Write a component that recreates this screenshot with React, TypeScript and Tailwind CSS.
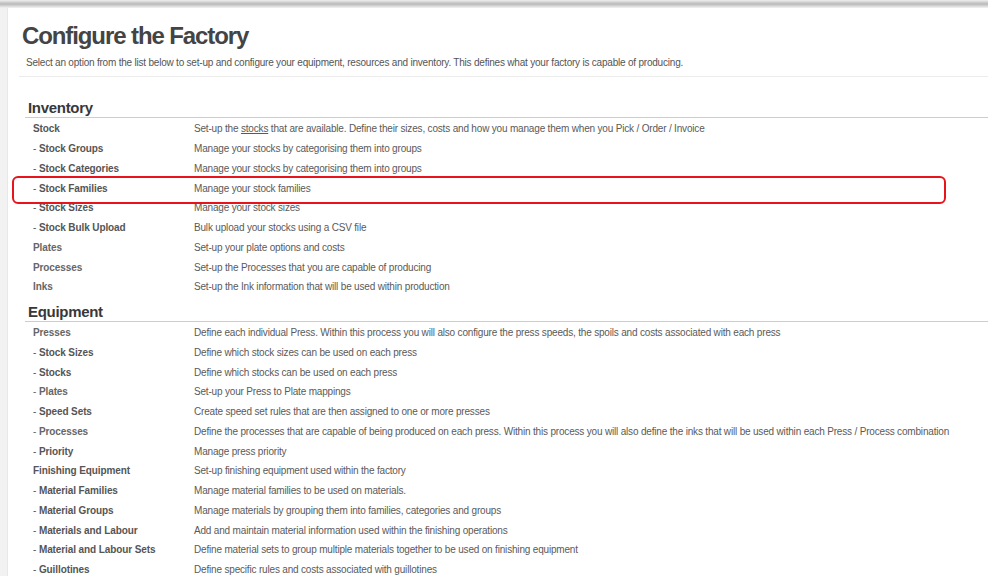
import React from 'react';

interface Row {
  label: string;
  sub?: boolean;
  soft?: boolean;
  desc: React.ReactNode;
}

const inventory: Row[] = [
  {
    label: 'Stock',
    desc: (
      <>
        Set-up the <span className="underline">stocks</span> that are available. Define their sizes, costs and how you manage them when you Pick / Order / Invoice
      </>
    ),
  },
  { label: 'Stock Groups', sub: true, desc: 'Manage your stocks by categorising them into groups' },
  { label: 'Stock Categories', sub: true, desc: 'Manage your stocks by categorising them into groups' },
  { label: 'Stock Families', sub: true, desc: 'Manage your stock families' },
  { label: 'Stock Sizes', sub: true, desc: 'Manage your stock sizes' },
  { label: 'Stock Bulk Upload', sub: true, desc: 'Bulk upload your stocks using a CSV file' },
  { label: 'Plates', soft: true, desc: 'Set-up your plate options and costs' },
  { label: 'Processes', soft: true, desc: 'Set-up the Processes that you are capable of producing' },
  { label: 'Inks', soft: true, desc: 'Set-up the Ink information that will be used within production' },
];

const equipment: Row[] = [
  {
    label: 'Presses',
    soft: true,
    desc: 'Define each individual Press. Within this process you will also configure the press speeds, the spoils and costs associated with each press',
  },
  { label: 'Stock Sizes', sub: true, desc: 'Define which stock sizes can be used on each press' },
  { label: 'Stocks', sub: true, desc: 'Define which stocks can be used on each press' },
  { label: 'Plates', sub: true, soft: true, desc: 'Set-up your Press to Plate mappings' },
  { label: 'Speed Sets', sub: true, desc: 'Create speed set rules that are then assigned to one or more presses' },
  {
    label: 'Processes',
    sub: true,
    soft: true,
    desc: 'Define the processes that are capable of being produced on each press. Within this process you will also define the inks that will be used within each Press / Process combination',
  },
  { label: 'Priority', sub: true, desc: 'Manage press priority' },
  { label: 'Finishing Equipment', desc: 'Set-up finishing equipment used within the factory' },
  { label: 'Material Families', sub: true, desc: 'Manage material families to be used on materials.' },
  { label: 'Material Groups', sub: true, desc: 'Manage materials by grouping them into families, categories and groups' },
  { label: 'Materials and Labour', sub: true, desc: 'Add and maintain material information used within the finishing operations' },
  { label: 'Material and Labour Sets', sub: true, desc: 'Define material sets to group multiple materials together to be used on finishing equipment' },
  { label: 'Guillotines', sub: true, desc: 'Define specific rules and costs associated with guillotines' },
];

const Section: React.FC<{ title: string; rows: Row[]; className?: string }> = ({ title, rows, className = '' }) => (
  <div className={`ml-[17px] ${className}`}>
    <h2 className="pl-[3px] h-[18px] leading-[18px] text-[15px] font-bold tracking-[-0.3px] text-[#383838] border-b border-[#cdcdcd] box-content">
      {title}
    </h2>
    {rows.map((r, i) => (
      <div key={i} className="flex h-[19.75px] pt-[2px] items-center text-[10px] whitespace-nowrap">
        <div className={`pl-[8px] w-[169px] shrink-0 font-bold tracking-[-0.1px] ${r.soft ? 'text-[#666]' : 'text-[#555]'}`}>
          {r.sub && <span className="font-normal">- </span>}
          {r.label}
        </div>
        <div className="text-[#5a5a5a] tracking-[-0.18px]">{r.desc}</div>
      </div>
    ))}
  </div>
);

export default function App() {
  return (
    <div
      className="relative w-[988px] h-[576px] overflow-hidden bg-white"
      style={{ fontFamily: '"Liberation Sans", Arial, sans-serif' }}
    >
      <div className="h-[8px] bg-gradient-to-b from-[#efefef] via-[#b9b9b9] to-[#f4f4f4]" />
      <div className="flex h-[568px]">
        <div className="w-[8px] shrink-0 bg-[#f2f2f2] border-r border-[#e8e8e8]" />
        <div className="flex-1 min-w-0">
          <h1 className="mt-[14px] ml-[14px] h-[28px] leading-[28px] text-[24px] font-bold tracking-[-1.1px] text-[#444]">
            Configure the Factory
          </h1>
          <p className="mt-[6px] ml-[18px] h-[14px] leading-[14px] text-[10px] tracking-[-0.21px] text-[#555] whitespace-nowrap">
            Select an option from the list below to set-up and configure your equipment, resources and inventory. This defines what your factory is capable of producing.
          </p>
          <div className="mt-[6px] ml-[11px] border-t border-[#ececec]" />
          <Section title="Inventory" rows={inventory} className="mt-[22px]" />
          <Section title="Equipment" rows={equipment} className="mt-[7px]" />
        </div>
      </div>
      <div className="absolute left-[12px] top-[176px] w-[934px] h-[28px] border-2 border-[#e8141b] rounded-[6px]" />
    </div>
  );
}
